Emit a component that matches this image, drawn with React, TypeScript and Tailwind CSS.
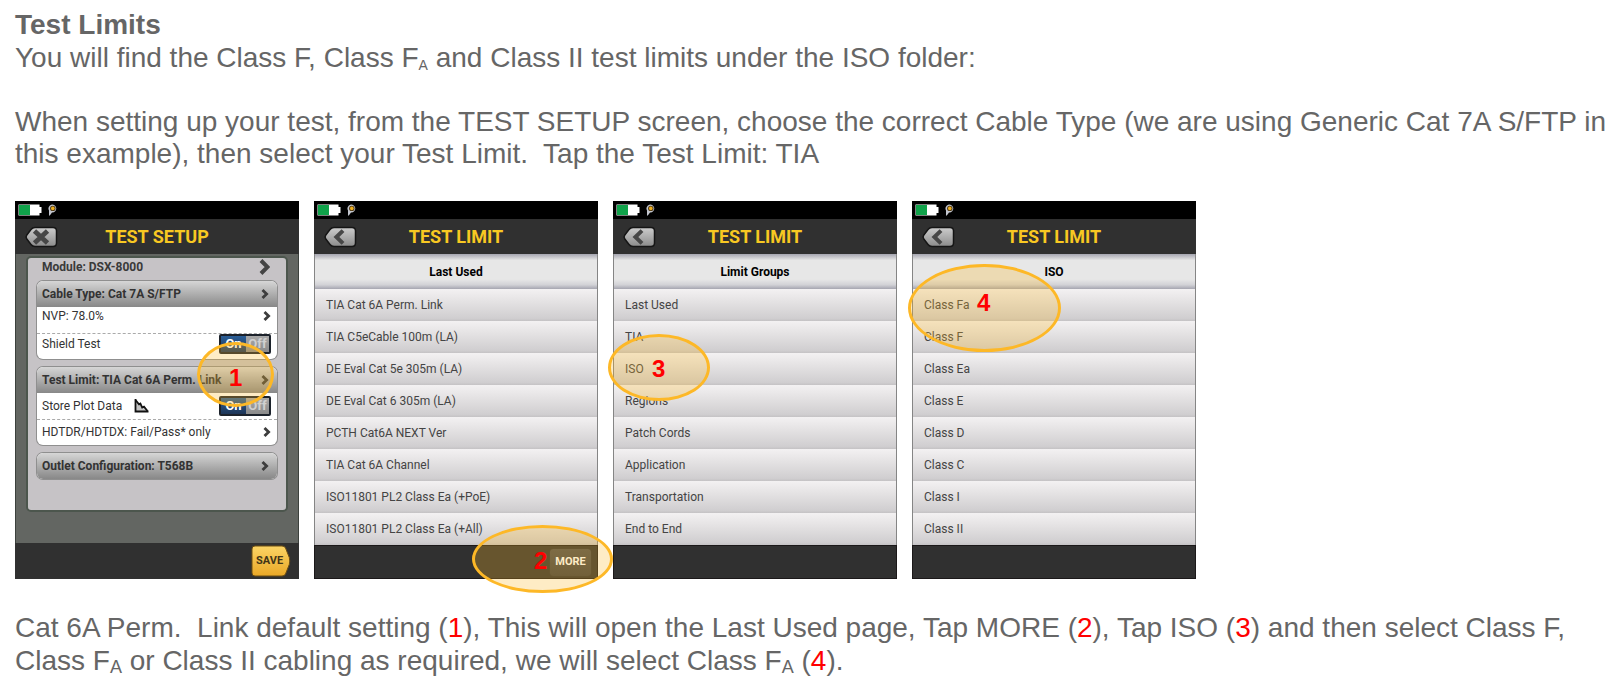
import type { ReactNode } from "react";

function StatusBar() {
  return (
    <div className="flex h-[18px] items-center gap-[6px] bg-black pl-[3px]">
      <svg width="24" height="12" viewBox="0 0 24 12" aria-hidden="true">
        <path d="M0.5 0.5H21.5V3H23.5V9H21.5V11.5H0.5Z" fill="#fff" />
        <rect x="1" y="1" width="11" height="10" fill="#10a24a" />
      </svg>
      <svg width="9" height="12" viewBox="0 0 9 12" aria-hidden="true">
        <path d="M1 12V6.500A3.900 3.900 0 1 1 4 8.400L2.600 10.500Z" fill="#c3c6ce" />
        <circle cx="4.800" cy="4.400" r="2.700" fill="#4a3410" />
        <circle cx="4.800" cy="4.400" r="1.800" fill="#f0b020" />
      </svg>
    </div>
  );
}

function BackIcon({ id, close }: { id: string; close?: boolean }) {
  return (
    <svg width="34" height="22" viewBox="0 0 34 22" aria-hidden="true">
      <defs>
        <linearGradient id={id} x1="0" y1="0" x2="0" y2="1">
          <stop offset="0" stopColor="#cdcdcd" />
          <stop offset="1" stopColor="#8c8c8c" />
        </linearGradient>
      </defs>
      <path
        d="M11 1.500H29Q32.500 1.500 32.500 5V17Q32.500 20.500 29 20.500H11Q8.500 20.500 7 18.500L2.800 13Q1.300 11 2.800 9L7 3.500Q8.500 1.500 11 1.500Z"
        fill={`url(#${id})`}
        stroke="#151515"
        strokeWidth="1.500"
      />
      {close ? (
        <path d="M10.500 5L23.500 17M23.500 5L10.500 17" stroke="#474747" strokeWidth="4.800" />
      ) : (
        <path d="M20 4.600L13.400 11L20 17.400" fill="none" stroke="#474747" strokeWidth="4" />
      )}
    </svg>
  );
}

function Chevron({ large }: { large?: boolean }) {
  return large ? (
    <svg width="11" height="16" viewBox="0 0 11 16" aria-hidden="true">
      <path d="M2 1.500L8.500 8L2 14.500" fill="none" stroke="#444" strokeWidth="4" />
    </svg>
  ) : (
    <svg width="8" height="10" viewBox="0 0 8 10" aria-hidden="true">
      <path d="M1.500 1L5.600 5L1.500 9" fill="none" stroke="#3d3d3d" strokeWidth="2.800" />
    </svg>
  );
}

function PlotIcon() {
  return (
    <svg width="15" height="14" viewBox="0 0 15 14" aria-hidden="true">
      <path d="M2 2L5 6L6.500 5L8.500 9L10 8L13 12H2Z" fill="#c4c4c4" />
      <path d="M1.500 0V12.500H14.500" fill="none" stroke="#111" strokeWidth="1.800" />
      <path d="M1.500 1L5 5.400L6.400 4.600L8.200 8.600L10 7.600L13.500 12" fill="none" stroke="#111" strokeWidth="1.800" />
    </svg>
  );
}

function Screen({ id, title, close, children }: { id: string; title: string; close?: boolean; children: ReactNode }) {
  return (
    <section className="relative flex h-[378px] w-[284px] shrink-0 flex-col font-['Roboto',sans-serif]">
      <StatusBar />
      <header className="grid h-[35px] grid-cols-[1fr_auto_1fr] items-center bg-[#303030]">
        <button type="button" aria-label={close ? "Close" : "Back"} className="ml-[9px] w-[34px]">
          <BackIcon id={id} close={close} />
        </button>
        <h2 className="text-[18px] font-bold text-[#f8c822]">{title}</h2>
      </header>
      {children}
    </section>
  );
}

function Marker({ label, className, labelClassName }: { label: string; className: string; labelClassName: string }) {
  return (
    <div className={`absolute z-10 rounded-[50%] border-3 border-[#fdb827] bg-[#fdb827]/27 ${className}`}>
      <span
        className={`absolute font-['Liberation_Sans',sans-serif] text-[24px] leading-6 font-bold text-[#ff0000] ${labelClassName}`}
      >
        {label}
      </span>
    </div>
  );
}

function Toggle({ label }: { label: string }) {
  return (
    <button
      type="button"
      role="switch"
      aria-checked="true"
      aria-label={label}
      className="flex h-5 w-[52px] overflow-hidden rounded-[2px] border-2 border-[#1c222b] text-[13px] leading-4 font-bold"
    >
      <span className="w-[25px] bg-linear-to-b from-[#2b5f98] to-[#1d3557] text-center text-white">On</span>
      <span className="flex-1 bg-linear-to-b from-[#a9a9a9] to-[#8b8b8b] text-center text-[#d0d0d0]">Off</span>
    </button>
  );
}

function GroupHeader({ children }: { children: ReactNode }) {
  return (
    <button
      type="button"
      className="flex h-[26px] w-full items-center justify-between bg-linear-to-b from-[#d6d6d6] to-[#888] pr-2 pb-px pl-[5px] text-[12px] font-bold text-[#333]"
    >
      {children}
      <Chevron />
    </button>
  );
}

function SetupScreen() {
  const row = "flex h-[26px] w-full items-center justify-between pr-[6px] pl-[5px] text-[12px] text-[#333]";
  const group = "overflow-hidden rounded-[6px] bg-white shadow-[0_0_0_1px_#8f8f8f]";
  return (
    <Screen id="back-setup" title="TEST SETUP" close>
      <div className="flex-1 border-x border-[#3c413d] bg-[#636662] px-[10px] pt-[2px]">
        <div className="flex h-[256px] flex-col gap-2 rounded-[5px] border-2 border-[#4c564d] bg-[#c6c3c6] px-[9px]">
          <button
            type="button"
            className="-mb-2 flex h-[23px] shrink-0 items-center justify-between pr-[7px] pb-[5px] pl-[5px] text-[12px] font-bold text-[#3a3a3a]"
          >
            Module: DSX-8000
            <Chevron large />
          </button>
          <div className={group}>
            <GroupHeader>Cable Type: Cat 7A S/FTP</GroupHeader>
            <button type="button" className={`${row} pb-2`}>
              NVP: 78.0%
              <Chevron />
            </button>
            <div className={`${row} border-t border-dashed border-[#aaa] pb-[6px]`}>
              Shield Test
              <Toggle label="Shield Test" />
            </div>
          </div>
          <div className={group}>
            <GroupHeader>Test Limit: TIA Cat 6A Perm. Link</GroupHeader>
            <div className={row}>
              <span className="flex items-center gap-3">
                Store Plot Data
                <PlotIcon />
              </span>
              <Toggle label="Store Plot Data" />
            </div>
            <button type="button" className={`${row} border-t border-dashed border-[#aaa] pb-px`}>
              HDTDR/HDTDX: Fail/Pass* only
              <Chevron />
            </button>
          </div>
          <div className={group}>
            <GroupHeader>Outlet Configuration: T568B</GroupHeader>
          </div>
        </div>
      </div>
      <footer className="flex h-9 items-center justify-end bg-[#303030] pr-2">
        <button type="button" className="relative flex h-8 w-10 items-center">
          <svg className="absolute inset-0" width="40" height="32" viewBox="0 0 40 32" aria-hidden="true">
            <defs>
              <linearGradient id="save-fill" x1="0" y1="0" x2="0" y2="1">
                <stop offset="0" stopColor="#fbd465" />
                <stop offset="1" stopColor="#eaa827" />
              </linearGradient>
            </defs>
            <path
              d="M4 1H31Q33.500 1 34.500 3L38.300 12.500Q39.200 16 38.300 19.500L34.500 29Q33.500 31 31 31H4Q1 31 1 28V4Q1 1 4 1Z"
              fill="url(#save-fill)"
              stroke="#6d4e12"
            />
          </svg>
          <span className="relative pl-[5px] text-[11px] font-bold text-[#433517]">SAVE</span>
        </button>
      </footer>
      <Marker label="1" className="top-[141px] left-[182px] h-[65px] w-[77px]" labelClassName="top-[21px] left-[29px]" />
    </Screen>
  );
}

function ListScreen({
  id,
  heading,
  items,
  more,
  children,
}: {
  id: string;
  heading: string;
  items: string[];
  more?: boolean;
  children: ReactNode;
}) {
  return (
    <Screen id={id} title="TEST LIMIT">
      <div className="border-x border-[#858585]">
        <h3 className="flex h-[35px] items-center justify-center bg-[linear-gradient(to_bottom,#a5a5b0,#e7e7e7_18%,#e7e7e7_72%,#d2d2d6_88%,#a5a5b0)] text-[12px] font-bold text-black">
          {heading}
        </h3>
        <ul>
          {items.map((item) => (
            <li key={item}>
              <button
                type="button"
                className="flex h-8 w-full items-center bg-[linear-gradient(to_bottom,#f3f1f2,#e4e2e3_40%,#d0ced0_92%,#c4c2c4)] pl-[11px] text-[12px] text-[#444]"
              >
                {item}
              </button>
            </li>
          ))}
        </ul>
      </div>
      <footer className="flex flex-1 items-center justify-end border border-[#1b1819] bg-[#303030] pr-[5px]">
        {more && (
          <button
            type="button"
            className="h-[29px] w-[43px] rounded-[4px] border border-[#333] bg-linear-to-b from-[#505050] to-[#404040] text-[11px] font-bold text-white"
          >
            MORE
          </button>
        )}
      </footer>
      {children}
    </Screen>
  );
}

const lastUsed = [
  "TIA Cat 6A Perm. Link",
  "TIA C5eCable 100m (LA)",
  "DE Eval Cat 5e 305m (LA)",
  "DE Eval Cat 6 305m (LA)",
  "PCTH Cat6A NEXT Ver",
  "TIA Cat 6A Channel",
  "ISO11801 PL2 Class Ea (+PoE)",
  "ISO11801 PL2 Class Ea (+All)",
];
const limitGroups = ["Last Used", "TIA", "ISO", "Regions", "Patch Cords", "Application", "Transportation", "End to End"];
const isoClasses = ["Class Fa", "Class F", "Class Ea", "Class E", "Class D", "Class C", "Class I", "Class II"];

const setupText =
  "When setting up your test, from the TEST SETUP screen, choose the correct Cable Type (we are using Generic Cat 7A S/FTP in this example), then select your Test Limit.\u00a0 Tap the Test Limit: TIA";

function Step({ children }: { children: ReactNode }) {
  return <span className="text-[#ff0000]">{children}</span>;
}

export default function App() {
  return (
    <main className="bg-white pt-2 pr-1 pl-[15px] font-['Liberation_Sans',sans-serif] text-[28px] leading-8 text-[#666]">
      <h1 className="pb-px leading-[33px] font-bold">Test Limits</h1>
      <p>
        You will find the Class F, Class F
        <sub className="bottom-[-3px] text-[14px]">A</sub> and Class II test limits under the ISO folder:
      </p>
      <p className="mt-8">{setupText}</p>
      <div className="mt-[31px] flex flex-wrap gap-[15px] leading-normal">
        <SetupScreen />
        <ListScreen id="back-last" heading="Last Used" items={lastUsed} more>
          <Marker label="2" className="top-[324px] left-[158px] h-[68px] w-[141px]" labelClassName="top-[21px] left-[59px]" />
        </ListScreen>
        <ListScreen id="back-groups" heading="Limit Groups" items={limitGroups}>
          <Marker label="3" className="top-[133px] left-[-5px] h-[67px] w-[102px]" labelClassName="top-[20px] left-[41px]" />
        </ListScreen>
        <ListScreen id="back-iso" heading="ISO" items={isoClasses}>
          <Marker label="4" className="top-[63px] left-[-4px] h-[88px] w-[153px]" labelClassName="top-[24px] left-[66px]" />
        </ListScreen>
      </div>
      <p className="mt-8 pr-4 leading-[33px]">
        Cat 6A Perm.{"\u00a0 "}Link default setting (<Step>1</Step>), This will open the Last Used page, Tap MORE (
        <Step>2</Step>), Tap ISO (<Step>3</Step>) and then select Class F,{" "}
        <span>Class F</span>
        <sub className="bottom-[-3px] text-[18px]">A</sub> or Class II cabling as required, we will select Class F
        <sub className="bottom-[-3px] text-[18px]">A</sub> (<Step>4</Step>).
      </p>
    </main>
  );
}
